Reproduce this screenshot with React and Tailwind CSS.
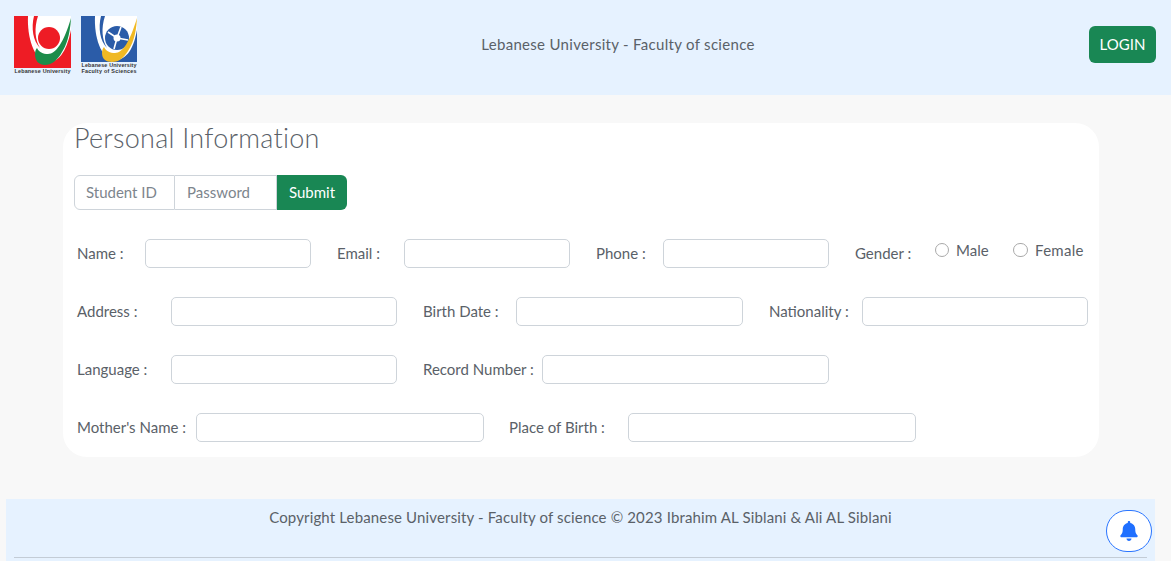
import { FaBell } from 'react-icons/fa';

function LuLogo() {
  return (
    <svg width="58" height="58" viewBox="0 0 58 58">
      <rect width="57" height="52" fill="#ee1c25" />
      <path d="M14 0H57V14C52 38 44 46 32 47C20 42 13 22 14 0Z" fill="#fff" />
      <path d="M20 0H24C20 12 21 24 26 32C19 25 17 12 20 0Z" fill="#ee1c25" />
      <circle cx="35" cy="22" r="11" fill="#ee1c25" />
      <path d="M57 2C56 20 52 30 48 36C43 45 37 49 31 49C25 49 21 45 21 38C21 35 22 33 23 32C25 36 29 38 34 38C42 38 50 26 57 2Z" fill="#1c8c4a" />
      <text x="0.5" y="57" fontSize="5.4" fontFamily="Liberation Sans, sans-serif" fontWeight="700" fill="#333" textLength="56">Lebanese University</text>
    </svg>
  );
}

function ScienceLogo() {
  return (
    <svg width="58" height="58" viewBox="0 0 58 58">
      <rect width="56" height="46" fill="#2b5ca8" />
      <path d="M14 0H56V14C52 36 44 44 32 45C20 41 13 22 14 0Z" fill="#fff" />
      <path d="M20 0H24C20 12 21 24 26 32C19 25 17 12 20 0Z" fill="#2b5ca8" />
      <circle cx="36" cy="22" r="12" fill="#2b5ca8" />
      <path d="M27 16L36 22L40 11M36 22L47 24M36 22L33 33" stroke="#fff" strokeWidth="1.6" fill="none" />
      <circle cx="36" cy="22" r="3.5" fill="#fff" />
      <path d="M56 2C55 20 51 29 47 35C42 43 37 46 31 46C25 46 21 43 21 37C21 34 22 32 23 31C25 35 29 37 34 37C42 37 49 25 56 2Z" fill="#f0b924" />
      <text x="0.5" y="51" fontSize="5.4" fontFamily="Liberation Sans, sans-serif" fontWeight="700" fill="#333" textLength="55">Lebanese University</text>
      <text x="0.5" y="57" fontSize="5.4" fontFamily="Liberation Sans, sans-serif" fontWeight="700" fill="#333" textLength="55">Faculty of Sciences</text>
    </svg>
  );
}

function Field({ label, labelWidth, inputWidth, gap }) {
  return (
    <div className={`flex items-center ${gap}`}>
      <label className={`${labelWidth} whitespace-nowrap`}>{label}</label>
      <input type="text" className={`${inputWidth} h-[29px] bg-white border border-[#ced4da] rounded-[5px]`} />
    </div>
  );
}

export default function App() {
  return (
    <div className="h-[561px] overflow-hidden bg-[#f8f8f8] text-[15px] text-[#5a6168] font-['Lato',sans-serif]">
      <header className="h-[95px] bg-[#e6f2ff] flex items-start justify-between pl-[14px] pr-[15px]">
        <div className="flex gap-[9px] pt-[16px]">
          <LuLogo />
          <ScienceLogo />
        </div>
        <div className="pt-[33px] pl-[8px] tracking-[0.3px]">Lebanese University - Faculty of science</div>
        <button className="mt-[26px] w-[67px] h-[37px] rounded-md bg-[#198754] text-white">LOGIN</button>
      </header>

      <main className="ml-[63px] mt-[28px] w-[1036px] h-[334px] bg-white rounded-[24px] pl-[11px] relative">
        <h1 className="text-[27px] leading-[30px] font-light tracking-[0.25px]">Personal Information</h1>
        <div className="flex mt-[22px] w-fit h-[35px]">
          <div className="w-[101px] border border-[#ced4da] rounded-l-md flex items-center pl-[11px] text-[#7d858d]">Student ID</div>
          <div className="w-[102px] border border-l-0 border-[#ced4da] flex items-center pl-[12px] text-[#7d858d]">Password</div>
          <button className="w-[70px] bg-[#198754] text-white rounded-r-md">Submit</button>
        </div>

        <div className="flex pl-[3px] mt-[29px] h-[29px]">
          <Field label="Name :" labelWidth="w-[68px]" inputWidth="w-[166px]" gap="mr-[26px]" />
          <Field label="Email :" labelWidth="w-[67px]" inputWidth="w-[166px]" gap="mr-[26px]" />
          <Field label="Phone :" labelWidth="w-[67px]" inputWidth="w-[166px]" gap="mr-[26px]" />
          <div className="flex items-center">
            <label className="w-[80px]">Gender :</label>
            <div className="flex items-center gap-[7px] mb-[7px] w-[78px]">
              <span className="w-[14px] h-[14px] rounded-full border border-[#a9a9a9] bg-white" />
              <span>Male</span>
            </div>
            <div className="flex items-center gap-[7px] mb-[7px]">
              <span className="w-[15px] h-[14px] rounded-full border border-[#a9a9a9] bg-white" />
              <span className="tracking-[0.3px]">Female</span>
            </div>
          </div>
        </div>

        <div className="flex pl-[3px] mt-[29px] h-[29px]">
          <Field label="Address :" labelWidth="w-[94px]" inputWidth="w-[226px]" gap="mr-[26px]" />
          <Field label="Birth Date :" labelWidth="w-[93px]" inputWidth="w-[227px]" gap="mr-[26px]" />
          <Field label="Nationality :" labelWidth="w-[93px]" inputWidth="w-[226px]" gap="" />
        </div>

        <div className="flex pl-[3px] mt-[29px] h-[29px]">
          <Field label="Language :" labelWidth="w-[94px]" inputWidth="w-[226px]" gap="mr-[26px]" />
          <Field label="Record Number :" labelWidth="w-[119px]" inputWidth="w-[287px]" gap="" />
        </div>

        <div className="flex pl-[3px] mt-[29px] h-[29px]">
          <Field label="Mother's Name :" labelWidth="w-[119px]" inputWidth="w-[288px]" gap="mr-[25px]" />
          <Field label="Place of Birth :" labelWidth="w-[119px]" inputWidth="w-[288px]" gap="" />
        </div>
      </main>

      <footer className="ml-[6px] mt-[42px] w-[1149px] h-[70px] bg-[#e6f2ff] relative pt-[8px]">
        <p className="text-center leading-[20px] tracking-[0.15px]">Copyright Lebanese University - Faculty of science © 2023 Ibrahim AL Siblani &amp; Ali AL Siblani</p>
        <hr className="mx-[8px] mt-[30px] border-[#c3ccd6]" />
        <button className="absolute right-[3px] top-[11px] w-[46px] h-[42px] rounded-full border border-[#2a75ff] bg-white flex items-center justify-center text-[#1f6fff]">
          <FaBell className="text-[20px]" />
        </button>
      </footer>
    </div>
  );
}
